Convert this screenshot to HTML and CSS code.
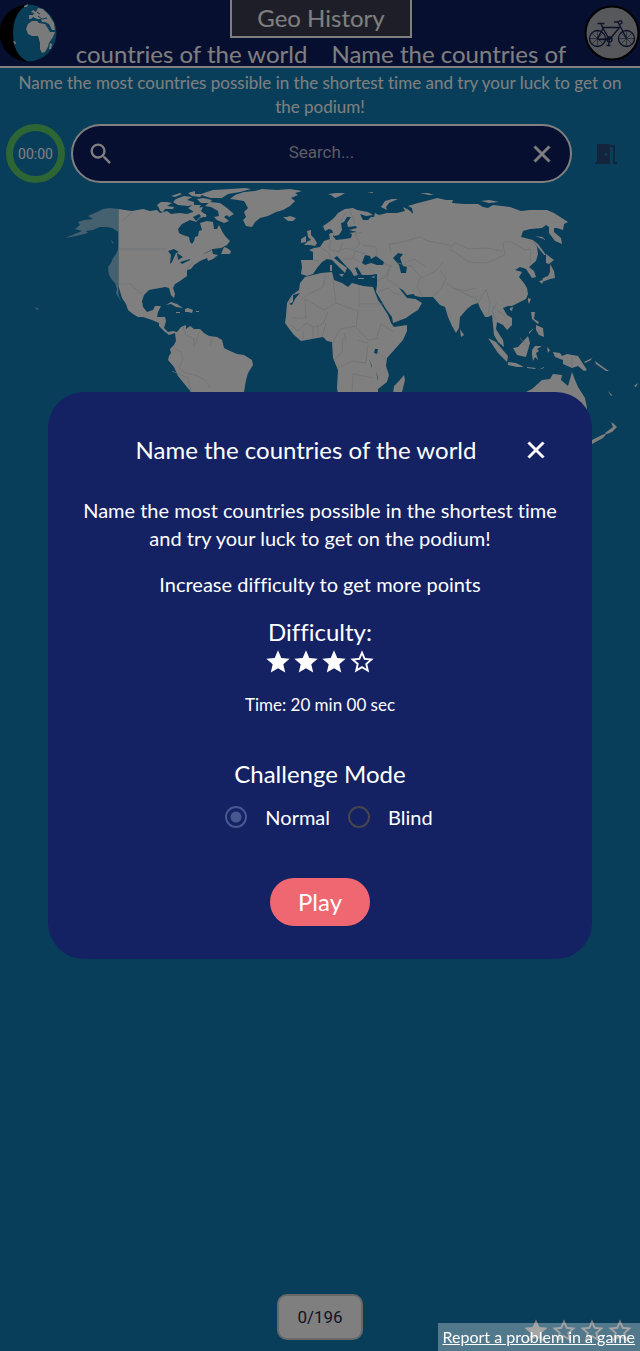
FILE: index.html
```html
<!DOCTYPE html>
<html lang="en">
<head>
  <meta charset="UTF-8">
  <meta name="viewport" content="width=device-width, initial-scale=1.0">
  <title>Geo History - Name the countries of the world</title>
  <link rel="stylesheet" href="styles.css">
</head>
<body>

  <svg class="defs" aria-hidden="true">
    <symbol id="star" viewBox="0 0 24 24"><path d="M12 17.27 18.18 21l-1.64-7.03L22 9.24l-7.19-.61L12 2 9.19 8.63 2 9.24l5.46 4.73L5.82 21z"/></symbol>
    <symbol id="star-empty" viewBox="0 0 24 24"><path d="m22 9.24-7.19-.62L12 2 9.19 8.63 2 9.24l5.46 4.73L5.82 21 12 17.27 18.18 21l-1.63-7.03zM12 15.4l-3.76 2.27 1-4.28-3.32-2.88 4.38-.38L12 6.1l1.71 4.04 4.38.38-3.32 2.88 1 4.28z"/></symbol>
    <symbol id="cross" viewBox="0 0 24 24"><path d="M19 6.41 17.59 5 12 10.59 6.41 5 5 6.41 10.59 12 5 17.59 6.41 19 12 13.41 17.59 19 19 17.59 13.41 12z"/></symbol>
  </svg>

  <div class="page">
    <header class="header">
      <a class="logo" href="#" aria-label="Home">
        <svg viewBox="0 0 58 58">
          <circle cx="28" cy="29" r="28.500" fill="#000"/>
          <path d="M28 .5a28.500 28.500 0 0 1 0 57C17 53 13 42 13 29S18 5 28 .5z" fill="#107cae"/>
          <g fill="#f4f4f4">
            <path d="M26 25 28 20 32 17 37 17 39 19 45 20 48 23 50 28 55 28 53 33 49 39 48 43 45 48 42 49 40 45 40 39 38 32 32 32 28 30zM29 15 29 11 33 11 34 9 31 8 33 6 36 8 38 4 43 5 49 11 54 19 55 26 52 26 49 20 45 18 42 18 41 15 37 15 33 13 31 15zM50 39l2 1-1 5-2 0zM13 37l3 1-1 3zM24 2l4-2-1 3-3 0z"/>
          </g>
          <path d="M46 21l5 7M38 12l4 3 5-1M37 8l3 2" stroke="#107cae" fill="none"/>
        </svg>
      </a>
      <div class="header-middle">
        <h1 class="site-title">Geo History</h1>
        <div class="ticker"><span>countries of the world</span><span>Name the countries of</span></div>
      </div>
      <a class="avatar" href="#" aria-label="Profile">
        <svg viewBox="0 0 56 56">
          <circle cx="28" cy="28" r="26.500" fill="#aeb0b8" stroke="#000" stroke-width="2"/>
          <g fill="none" stroke="#14224e" stroke-width="1.300">
            <circle cx="13.500" cy="33.500" r="8"/><circle cx="42.500" cy="33.500" r="8"/>
            <path d="M13.500 33.500l6-11h16l-10 12-7-12-1.500-4m-3.500 0h7M25.500 34.500h-12M34 17l8.500 16.500M34 17l-4 0m4 0q4-3 4 1l-3 2M25.500 34.500l-1 6m-2 0h4"/>
            <circle cx="25.500" cy="34.500" r="2.500"/>
            <path stroke-width=".5" d="M13.500 26v15M6 33.500h15M8 28l11 11M19 28L8 39M42.500 26v15M35 33.500h15M37 28l11 11M48 28L37 39"/>
          </g>
        </svg>
      </a>
    </header>

    <p class="intro">Name the most countries possible in the shortest time and try your luck to get on the podium!</p>

    <div class="toolbar">
      <div class="timer">00:00</div>
      <div class="search">
        <svg class="icon-search" viewBox="0 0 24 24"><path d="M15.500 14h-.79l-.28-.27A6.470 6.470 0 0 0 16 9.500 6.500 6.500 0 1 0 9.500 16c1.610 0 3.090-.59 4.230-1.570l.27.28v.79l5 4.990L20.490 19zm-6 0a4.500 4.500 0 1 1 0-9 4.500 4.500 0 0 1 0 9z"/></svg>
        <input type="text" placeholder="Search..." aria-label="Search">
        <button class="icon-button" aria-label="Clear"><svg viewBox="0 0 24 24"><use href="#cross"/></svg></button>
      </div>
      <button class="icon-button exit" aria-label="Exit">
        <svg viewBox="0 0 24 24"><path fill-rule="evenodd" d="M3 2h13v1h5v17h2v2h-4V5h-3v17H1v-2h2zM10.500 11v2.500h3V11z"/></svg>
      </button>
    </div>

    <svg class="map" viewBox="0 183 640 290" role="img" aria-label="World map">
      <g class="land faded">
        <path d="M118.500 209 110 208 103 209 97 212 88 216 93 219 84 220 78 222 80 225 75 229 82 231 65 238 76 236 88 233 86 231 93 230 100 227 107 227 112 228 118.500 232zM118.500 249 116 254 113 258 111 263 108 267 109 275 112 280 115 283 117 289 116 293 119 298 121 302 118.500 294zM111 240l3 3-2 0zM31 304l2 1M35 307l4 2-2 1zM4 377l4 2M63 369l2 1M45 384l3 1"/>
      </g>
      <g class="land">
        <!-- americas -->
        <path d="M118.500 209 125 210 132 211 143 209 150 211 157 210 160 213 167 211 171 214 180 213 187 214 193 212 197 208 203 207 201 211 207 216 200 218 196 222 190 220 182 224 178 229 179 233 183 235 189 237 190 242 192 244 194 241 195 237 198 236 199 231 202 230 200 223 207 221 213 222 214 229 217 229 219 225 223 233 226 237 230 241 227 245 221 248 213 249 207 252 202 255 208 252 212 250 213 254 218 255 213 259 208 261 207 258 200 261 194 265 191 269 187 270 187 276 180 281 175 284 173 288 175 294 174 298 171 295 169 288 165 287 160 288 154 289 149 290 144 295 142 301 143 307 147 312 153 310 155 306 161 306 158 312 157 317 165 317 166 321 164 328 168 332 173 331 177 332 181 327 186 325 186 329 190 326 194 329 200 329 204 333 209 336 217 337 222 340 224 348 230 351 237 354 244 355 252 360 253 365 248 373 246 380 244 392 234 400 228 412 220 420 208 450 200 468 192 450 191 392 182 381 178 376 174 367 168 360 169 356 171 353 170 349 174 345 176 341 175 333 169 335 164 331 159 326 159 323 152 320 143 317 138 317 133 314 128 310 126 304 122 298 118.500 286z"/>
        <path d="M166 305l5-3 6 2 6 4-7-1-5-3zM185 309l3-1 5 2-1 3-4-1-3 0zM176 312l4 0 0 1-4 0zM196 311l3 0 0 1-3 0zM224 247l3 1 4 3-1 3-9 0z"/>
        <!-- arctic islands and greenland -->
        <path d="M157 205l4-3 6 0 5 1-5 3 7 1-1 2-8 0-2 3-3-1-1-3zM176 199l8-3 8 1-5 3 7 2 0 3-6 1-10-1-5-3zM171 196l9-3 2 1-7 3zM188 193l7-2 0 3 8 0-3 3-8-1zM197 199l6-1 9 2-2 3-9 0zM201 194l12-4 18-1 14-1 6 1-11 3-12 2-6 4-11 0-7-2zM210 202l10 1 7 5 7 6-5 3-2-2-3 2 5 4-5 2-7-3-3-3 5-1-1-5-7-4-6-1zM188 208l5-3 8 0-2 3-5 4zM200 213l6 1 0 3-5 0z"/>
        <path d="M230 199 235 195 244 192 255 191 262 189 277 190 290 189 302 191 295 193 298 195 291 198 295 201 290 206 283 210 276 212 268 216 260 218 255 222 252 227 246 226 243 220 246 217 244 212 248 208 244 201 238 200zM283 217l4 0 3-1 6 2-3 3-5 0z"/>
        <path d="M328 194l8-1 9 0-5 3-5 2-4-3zM367 193l6-1 0 1zM381 207l4-6 7-2 6 0-9 4-3 4 1 3zM420 193l8 0 6 2-5 0zM481 201l8-1 10 2-10 1z"/>
        <!-- europe and asia -->
        <path d="M301 260 313 260 313 252 309 250 314 248 320 247 324 241 330 239 329 234 335 231 333 236 336 240 345 239 351 238 352 234 349 233 357 232 349 230 357 228 356 226 348 227 347 223 351 217 347 217 344 222 341 223 342 230 339 235 334 236 332 230 329 229 325 231 323 226 329 222 334 218 338 213 345 209 353 208 357 210 368 212 373 215 366 216 360 214 363 220 368 220 371 217 374 217 375 213 379 215 387 213 397 213 405 211 403 207 409 210 413 214 412 208 408 206 418 203 430 200 437 198 446 200 453 200 452 203 464 204 478 204 483 207 488 208 493 205 510 207 521 211 530 210 547 210 554 213 568 222 564 224 563 230 557 228 554 228 554 232 561 238 562 244 555 241 549 233 549 227 546 225 542 228 530 229 523 231 521 237 529 239 533 240 537 247 538 254 536 261 529 267 534 271 536 277 532 278 526 269 520 267 515 270 522 272 519 277 524 283 527 288 528 294 526 299 520 302 512 306 508 306 503 308 507 315 512 318 512 325 507 330 503 325 497 322 496 329 499 334 503 340 504 347 498 342 494 335 492 315 488 317 485 317 480 308 478 303 472 305 467 309 460 317 459 328 456 333 452 326 448 317 445 307 440 305 433 297 420 297 412 295 414 298 422 303 418 310 413 313 406 318 393 323 392 317 386 309 382 302 376 292 377 285 377 274 370 275 362 275 359 270 357 267 363 265 355 268 358 275 354 276 351 271 347 267 337 256 334 258 340 263 347 268 345 273 341 269 332 260 327 259 322 262 317 268 313 274 307 276 301 274 302 267zM304 245l6 0 5 1 2-3-3-5-3-3 0-5-4 1 1 6 3 3-3 1zM301 243l5-1 0-6-5 3zM330 265l2 0 0 6-2 0zM339 274l5 0-2 3zM358 278l6 0 0 1-6 0zM371 277l4-1-1 2zM307 202l1 0"/>
        <!-- africa -->
        <path d="M305 277 313 275 321 273 332 272 334 280 342 283 348 287 352 283 363 286 373 287 378 300 383 307 388 315 391 323 394 327 407 325 407 331 403 340 395 349 387 358 386 366 389 375 387 382 378 389 378 402 370 430 350 440 342 420 337 388 338 370 333 358 332 342 327 341 323 337 312 339 301 341 294 335 290 330 285 323 286 316 287 303 292 295 299 290 300 283zM394 386l5-5 5-6 1 5-4 16-4 4-4-6z"/>
        <!-- south east asia and oceania -->
        <path d="M546 240l-4-3-7-1zM533 240l5 4 8 11-2 0-8-10zM546 254l8 6-5 4-3-1zM550 264l4 7 1 7-5 1-8 3 1-4 5-2 2-4zM539 281l5-1-2 4zM528 298l3 1-2 5-1-3zM510 308l3-1-1 4-2-1zM460 329l4 6-3 2zM531 312l4 0-1 7 5 3-1 2-6-5zM536 325l7 3 1 9-5-2-3-5zM529 332l5-4-5 6z"/>
        <path d="M488 338l8 4 12 14-1 6-9-9zM508 362l8 1 8 4-7 0-9-2zM513 348l5-1 10-11 2 7-4 14-9-2zM532 350l3-4 7 0-5 3 2 2-3 2 2 7-3-3-2 4-1-6zM547 347l3 3-2 3zM527 367l9 1-1 1-8-1zM538 370l6-3 0 1zM553 352l7 1 2 3 5-2 11 2 9 14-3 1-6-5-6 2-9-4 0-4-8-3zM584 362l8-4 1-3-2 5-6 3zM595 361l8 6 6 4-3 0-10-7zM608 391l4 4-1 1zM634 386l4-3-2 4z"/>
        <path d="M520 395 532 389 542 380 550 379 553 374 562 375 561 380 568 386 572 372 575 380 578 387 585 398 587 408 580 430 520 430zM592 440 602 435 607 433 603 438 592 444zM605 433l8-6-2-5 3 2 3 3-5 5-5 2z"/>
      </g>
      <g class="water">
        <path d="M362 263l3-8 5 1 1 3 5-3 8 6-1 3-6 0-6-2-6 2zM393 258l5-5 5 1-3 4 3 8 4 1-1 6-5 0-2-8zM399 288l4 2 4 5 7-1 1 5-8-1zM168 251l6-2 5 3-3 1-4 9-2 2 1-9zM177 253l6 4-5 3zM180 262l10-3 0 1-8 4zM375 349l3 0-1 5-3-1zM369 359l3 7 0 2zM376 371l2 7 0 3zM293 295l7-2-5 6-3 6-3-1 4-2zM193 217l6-3 2 2-5 5zM189 222l6-1-5 6-7 1z"/>
      </g>
      <g class="borders">
        <path d="M118 249h49M122 221l10-9M119 284l11 0 6 5 6 5M187 269l7-8M183 327l3 8 8 4 0 8M173 348l8 4 2 7-4 9 6 5 10 2 10 5 5 8M200 330l-5 15M212 338l-2 8M172 371l16 7 3 14"/>
        <path d="M326 275l-3 12-14 7-9 6M305 299l19 11 12-7-3-24M359 285v22M359 304h25M336 303l22 8-2 16 12 13 13-2M292 318h14l-1-19M291 325l7 6 8-8 8 4 9-3 5-12M322 337l4-14M332 344l8-15 16-3M338 368l14-7 14 2 2-18M352 392l1-18 20 4M378 352l9 8M334 360l8-8 1-14M376 340l5-16 13 8M357 340l11 3M344 333l2 8M313 327v11M318 325v12M303 331v8"/>
        <path d="M314 260l5 1M320 247l9 6 2 7M331 240l-2 9 10 3 4-10M340 250l7-2 7 2 6-6-5-10 7-2M343 259l10 0 2-8 11 3M354 259l6 3M346 212l-5 9M350 210l5 14M362 245l14 2 1 10M384 263l8 4M377 281l8-4 5-8M378 292l10-4 6 5 8 2M390 265l-3 14 13 9M391 252l-2-8 9-1 22-6 8 4 22 4M397 263l14 3 11 12 15-8 6-8M423 297l-6-10 3-9M405 263l9-4 12 8M450 249l19 13 17 1 19-8-2-12M450 247l5-4 14 6 18-1 15 3M503 242l9 0 13 8 6-1-1 14M440 270l6 8-4 10-10 9M452 288l23 10M446 283l8 5 10 3 13-3M475 296l3 7 8-14 4 14-2 12M492 306l13 10M497 303l-5 8 4 9M520 338l8 9M572 355v13"/>
      </g>
    </svg>

    <footer class="footer">
      <div class="count">0/196</div>
      <div class="stars footer-stars">
        <svg><use href="#star"/></svg><svg><use href="#star-empty"/></svg><svg><use href="#star-empty"/></svg><svg><use href="#star-empty"/></svg>
      </div>
    </footer>
  </div>

  <div class="backdrop">
    <div class="modal" role="dialog" aria-labelledby="modalTitle">
      <div class="modal-header">
        <h2 id="modalTitle">Name the countries of the world</h2>
        <button class="icon-button" aria-label="Close"><svg viewBox="0 0 24 24"><use href="#cross"/></svg></button>
      </div>
      <p class="modal-text">Name the most countries possible in the shortest time and try your luck to get on the podium!</p>
      <p class="modal-text">Increase difficulty to get more points</p>
      <h3>Difficulty:</h3>
      <div class="stars">
        <svg><use href="#star"/></svg><svg><use href="#star"/></svg><svg><use href="#star"/></svg><svg><use href="#star-empty"/></svg>
      </div>
      <p class="time">Time: 20 min 00 sec</p>
      <h3>Challenge Mode</h3>
      <div class="modes">
        <label><input type="radio" name="mode" checked>Normal</label>
        <label><input type="radio" name="mode">Blind</label>
      </div>
      <button class="play">Play</button>
    </div>
  </div>

  <a class="report" href="#">Report a problem in a game</a>

</body>
</html>
```
FILE: styles.css
```css
* {
  box-sizing: border-box;
  margin: 0;
  padding: 0;
}
body {
  font-family: Lato, "Open Sans", sans-serif;
  font-variant-ligatures: none;
  background: #107cb4;
  color: #fff;
}
h1, h2, h3 {
  font-size: 24px;
  line-height: 32px;
  font-weight: normal;
}
svg {
  display: block;
}
.defs {
  position: absolute;
  width: 0;
  height: 0;
}
.page {
  display: flex;
  flex-direction: column;
  min-height: 100vh;
}

.header {
  display: flex;
  align-items: center;
  height: 68px;
  background: #0e1e60;
  border-bottom: 2px solid #fff;
}
.logo svg {
  width: 58px;
  height: 58px;
}
.avatar svg {
  width: 56px;
  height: 56px;
}
.header-middle {
  display: flex;
  flex-direction: column;
  flex: 1;
  align-items: center;
  align-self: flex-start;
}
.site-title {
  height: 38px;
  padding: 2px 25px;
  background: #3c3c50;
  border: 2px solid #fff;
  border-top: none;
}
.ticker {
  display: flex;
  justify-content: center;
  gap: 24px;
  white-space: nowrap;
  font-size: 24px;
  line-height: 32px;
}

.intro {
  padding: 3px 8px 0;
  font-size: 17px;
  line-height: 24px;
  text-align: center;
}

.toolbar {
  display: flex;
  align-items: center;
  gap: 6px;
  padding: 5px 6px 0;
}
.timer {
  display: flex;
  align-items: center;
  justify-content: center;
  flex-shrink: 0;
  width: 59px;
  height: 59px;
  border: 7px solid #5acb68;
  border-radius: 50%;
  font: 14px Roboto, sans-serif;
}
.search {
  display: flex;
  align-items: center;
  flex: 1;
  height: 59px;
  padding: 0 14px;
  background: #0e1e60;
  border: 2px solid #fff;
  border-radius: 30px;
}
.search input {
  flex: 1;
  min-width: 0;
  padding-bottom: 4px;
  background: none;
  border: none;
  outline: none;
  color: #fff;
  font: 17px Roboto, sans-serif;
  text-align: center;
}
.search input::placeholder {
  color: #b8b8c8;
}
.icon-search {
  width: 28px;
  height: 28px;
  fill: #fff;
}
.icon-button {
  background: none;
  border: none;
  cursor: pointer;
}
.icon-button svg {
  width: 28px;
  height: 28px;
  fill: #fff;
  stroke: #fff;
  stroke-width: 0.500;
}
.exit {
  padding: 0 16px;
}
.exit svg {
  width: 24px;
  height: 24px;
  fill: #264878;
  stroke: none;
}

.map {
  width: 100%;
}
.land {
  fill: #fff;
}
.faded {
  fill: #8ac0de;
}
.water {
  fill: #107cb4;
}
.borders {
  fill: none;
  stroke: #d8dee4;
  stroke-width: 0.700;
}

.footer {
  position: relative;
  display: flex;
  justify-content: center;
  margin-top: auto;
  padding-bottom: 11px;
}
.count {
  width: 86px;
  background: #fff;
  border: 2px solid #d0d0d0;
  border-radius: 10px;
  color: #28284c;
  font: 17px/42px Roboto, sans-serif;
  text-align: center;
}
.stars {
  display: flex;
  justify-content: center;
}
.stars svg {
  width: 28px;
  height: 28px;
  fill: #fff;
}
.footer-stars {
  position: absolute;
  right: 6px;
  bottom: 6px;
}

.backdrop {
  position: fixed;
  inset: 0;
  display: flex;
  align-items: center;
  justify-content: center;
  background: rgba(0, 0, 0, 0.5);
}
.modal {
  display: flex;
  flex-direction: column;
  align-items: center;
  width: 85%;
  padding: 32px 32px 33px;
  background: #142264;
  border-radius: 36px;
  text-align: center;
}
.modal-header {
  display: grid;
  grid-template-columns: 20px 1fr 48px;
  align-items: center;
  width: 100%;
  height: 52px;
  margin-bottom: 20px;
}
.modal-header h2 {
  grid-column: 2;
}
.modal-header .icon-button {
  justify-self: center;
}
.modal-text {
  margin-bottom: 18px;
  font-size: 20px;
  line-height: 28px;
}
.time {
  margin: 15px 0 39px;
  font-size: 17px;
  line-height: 28px;
}
.modes {
  display: flex;
  gap: 18px;
  margin: 15px 0 49px;
  padding-left: 18px;
  font-size: 20px;
  line-height: 24px;
}
.modes label {
  display: flex;
  align-items: center;
  gap: 18px;
}
.modes input {
  appearance: none;
  width: 22px;
  height: 22px;
  border: 2px solid #46464e;
  border-radius: 50%;
}
.modes input:checked {
  border-color: #465890;
  background: radial-gradient(circle, #465890 5px, transparent 6px);
}
.play {
  padding: 0 28px;
  background: #ef6871;
  border: none;
  border-radius: 24px;
  color: #fff;
  font: 24px/48px Lato, sans-serif;
  cursor: pointer;
}

.report {
  position: fixed;
  right: 0;
  bottom: 0;
  padding: 0 5px;
  background: rgba(255, 255, 255, 0.3);
  color: #fff;
  font-size: 16px;
  line-height: 28px;
}
```
